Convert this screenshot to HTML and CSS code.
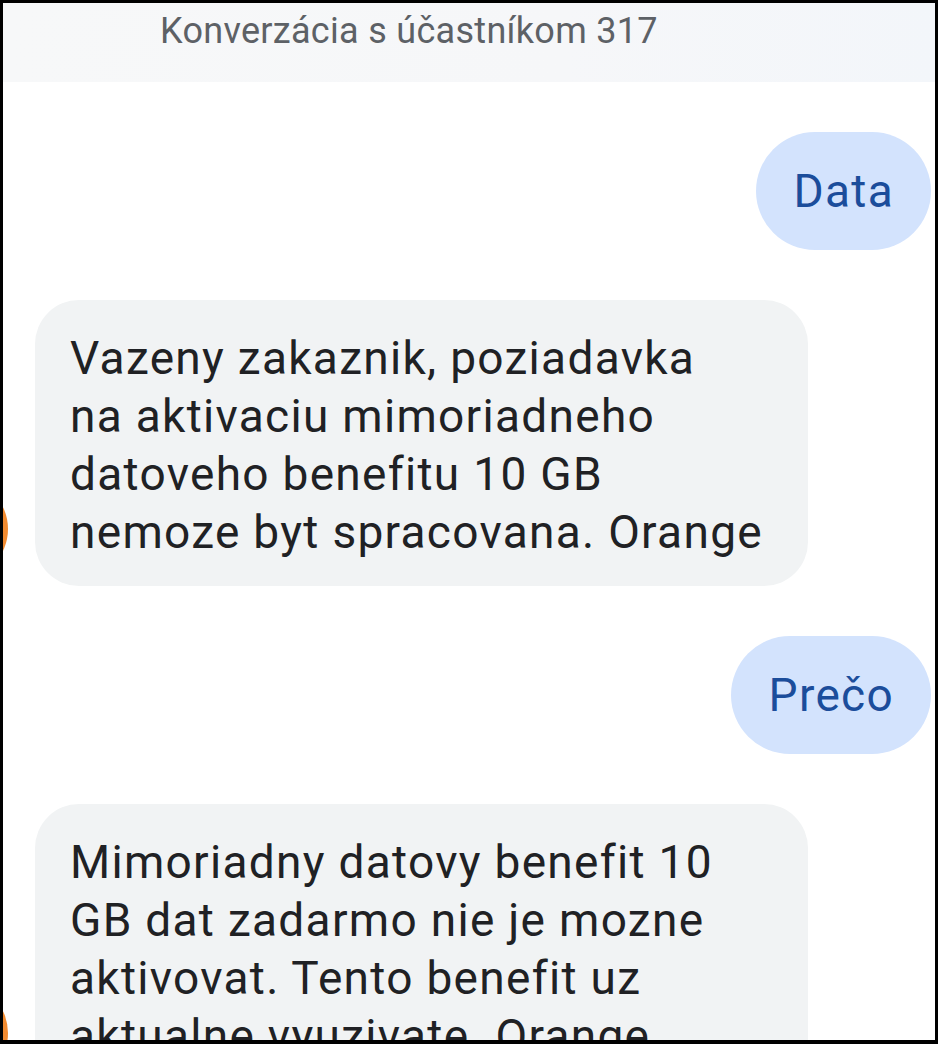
FILE: index.html
```html
<!DOCTYPE html>
<html lang="sk">

<head>
   <meta charset="UTF-8">
   <meta name="viewport" content="width=device-width, initial-scale=1.0">
   <title>Konverzácia s účastníkom 317</title>
   <link rel="stylesheet" href="styles.css">
</head>

<body>
   <div class="screen">
      <header class="topbar">
         <h1 class="topbar__title">Konverzácia s účastníkom 317</h1>
      </header>

      <main class="chat">
         <div class="msg msg--out">
            <p class="msg__bubble">Data</p>
         </div>

         <div class="msg msg--in">
            <span class="msg__avatar"></span>
            <p class="msg__bubble">Vazeny zakaznik, poziadavka<br>na aktivaciu mimoriadneho<br>datoveho benefitu 10 GB<br>nemoze byt spracovana. Orange</p>
         </div>

         <div class="msg msg--out">
            <p class="msg__bubble">Prečo</p>
         </div>

         <div class="msg msg--in">
            <span class="msg__avatar"></span>
            <p class="msg__bubble">Mimoriadny datovy benefit 10<br>GB dat zadarmo nie je mozne<br>aktivovat. Tento benefit uz<br>aktualne vyuzivate. Orange</p>
         </div>
      </main>
   </div>
</body>

</html>
```

FILE: styles.css
```css
*,
*::before,
*::after {
   box-sizing: border-box;
}

html,
body {
   margin: 0;
   padding: 0;
   background-color: #000;
   font-family: Roboto, "Noto Sans", Arial, sans-serif;
}

.screen {
   height: 100vh;
   border: 3px solid #000;
   border-bottom-width: 4px;
   background-color: #fff;
   overflow: hidden;
   display: flex;
   flex-direction: column;
}

.topbar {
   flex: none;
   height: 79px;
   padding: 10px 0 0 157px;
   background: linear-gradient(90deg, #f7f8f9 0%, #f6f7f9 60%, #f3f6fa 100%);
}

.topbar__title {
   margin: 0;
   font-size: 36px;
   font-weight: 400;
   line-height: 36px;
   letter-spacing: 0.3px;
   color: #5d6166;
}

.chat {
   display: flex;
   flex-direction: column;
   gap: 50px;
   padding: 50px 4px 0 0;
}

.msg {
   display: flex;
}

.msg__bubble {
   margin: 0;
   font-size: 46px;
   line-height: 58px;
   letter-spacing: 1.3px;
}

/* исходящие */
.msg--out {
   justify-content: flex-end;
}

.msg--out .msg__bubble {
   padding: 30px 37px 30px 38px;
   border-radius: 59px;
   background-color: #d3e3fd;
   color: #1b4d9b;
}

/* входящие */
.msg--in {
   align-items: flex-end;
   gap: 27px;
}

.msg__avatar {
   flex: none;
   width: 100px;
   height: 100px;
   margin: 0 0 7px -95px;
   border-radius: 50%;
   background-color: #f28b30;
}

.msg--in .msg__bubble {
   width: 773px;
   padding: 29px 35px 25px;
   border-radius: 44px;
   background-color: #f1f3f4;
   color: #202124;
}
```
